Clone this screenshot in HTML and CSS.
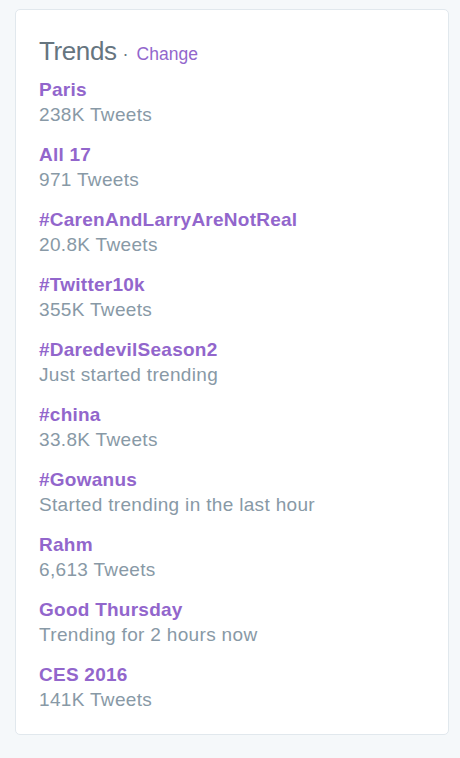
FILE: index.html
```html
<!DOCTYPE html>
<html>
<head>
<meta charset="utf-8">
<link rel="stylesheet" href="styles.css">
</head>
<body>
<div class="card">
  <h2 class="title"><span class="heading">Trends</span><span class="dot">·</span><a class="change">Change</a></h2>
  <ul class="trends">
    <li class="trend"><div class="name">Paris</div><div class="meta">238K Tweets</div></li>
    <li class="trend"><div class="name">All 17</div><div class="meta">971 Tweets</div></li>
    <li class="trend"><div class="name">#CarenAndLarryAreNotReal</div><div class="meta">20.8K Tweets</div></li>
    <li class="trend"><div class="name">#Twitter10k</div><div class="meta">355K Tweets</div></li>
    <li class="trend"><div class="name">#DaredevilSeason2</div><div class="meta">Just started trending</div></li>
    <li class="trend"><div class="name">#china</div><div class="meta">33.8K Tweets</div></li>
    <li class="trend"><div class="name">#Gowanus</div><div class="meta">Started trending in the last hour</div></li>
    <li class="trend"><div class="name">Rahm</div><div class="meta">6,613 Tweets</div></li>
    <li class="trend"><div class="name">Good Thursday</div><div class="meta">Trending for 2 hours now</div></li>
    <li class="trend"><div class="name">CES 2016</div><div class="meta">141K Tweets</div></li>
  </ul>
</div>
</body>
</html>
```
FILE: styles.css
```css
html, body {
  margin: 0;
  background: #f5f8fa;
  font-family: "Liberation Sans", Arial, sans-serif;
}
body {
  padding: 9px 11px 0 15px;
  height: 758px;
  box-sizing: border-box;
}
.card {
  width: 434px;
  box-sizing: border-box;
  background: #fff;
  border: 1px solid #e1e8ed;
  border-radius: 5px;
  padding: 26px 23px 22px 23px;
}
.title {
  margin: 0;
  font-size: 26px;
  line-height: 30px;
  font-weight: normal;
  color: #66757f;
  white-space: nowrap;
}
.heading {
  letter-spacing: -0.4px;
}
.dot {
  font-size: 18px;
  color: #66757f;
  margin: 0 8px 0 6px;
}
.change {
  font-size: 17.5px;
  color: #9266cc;
}
.trends {
  list-style: none;
  margin: 8px 0 0 0;
  padding: 0;
  display: flex;
  flex-direction: column;
  gap: 15px;
}
.name {
  font-size: 19px;
  line-height: 25px;
  font-weight: bold;
  color: #9266cc;
  letter-spacing: 0.25px;
}
.meta {
  font-size: 19px;
  line-height: 25px;
  color: #8899a6;
  letter-spacing: 0.33px;
}
```
